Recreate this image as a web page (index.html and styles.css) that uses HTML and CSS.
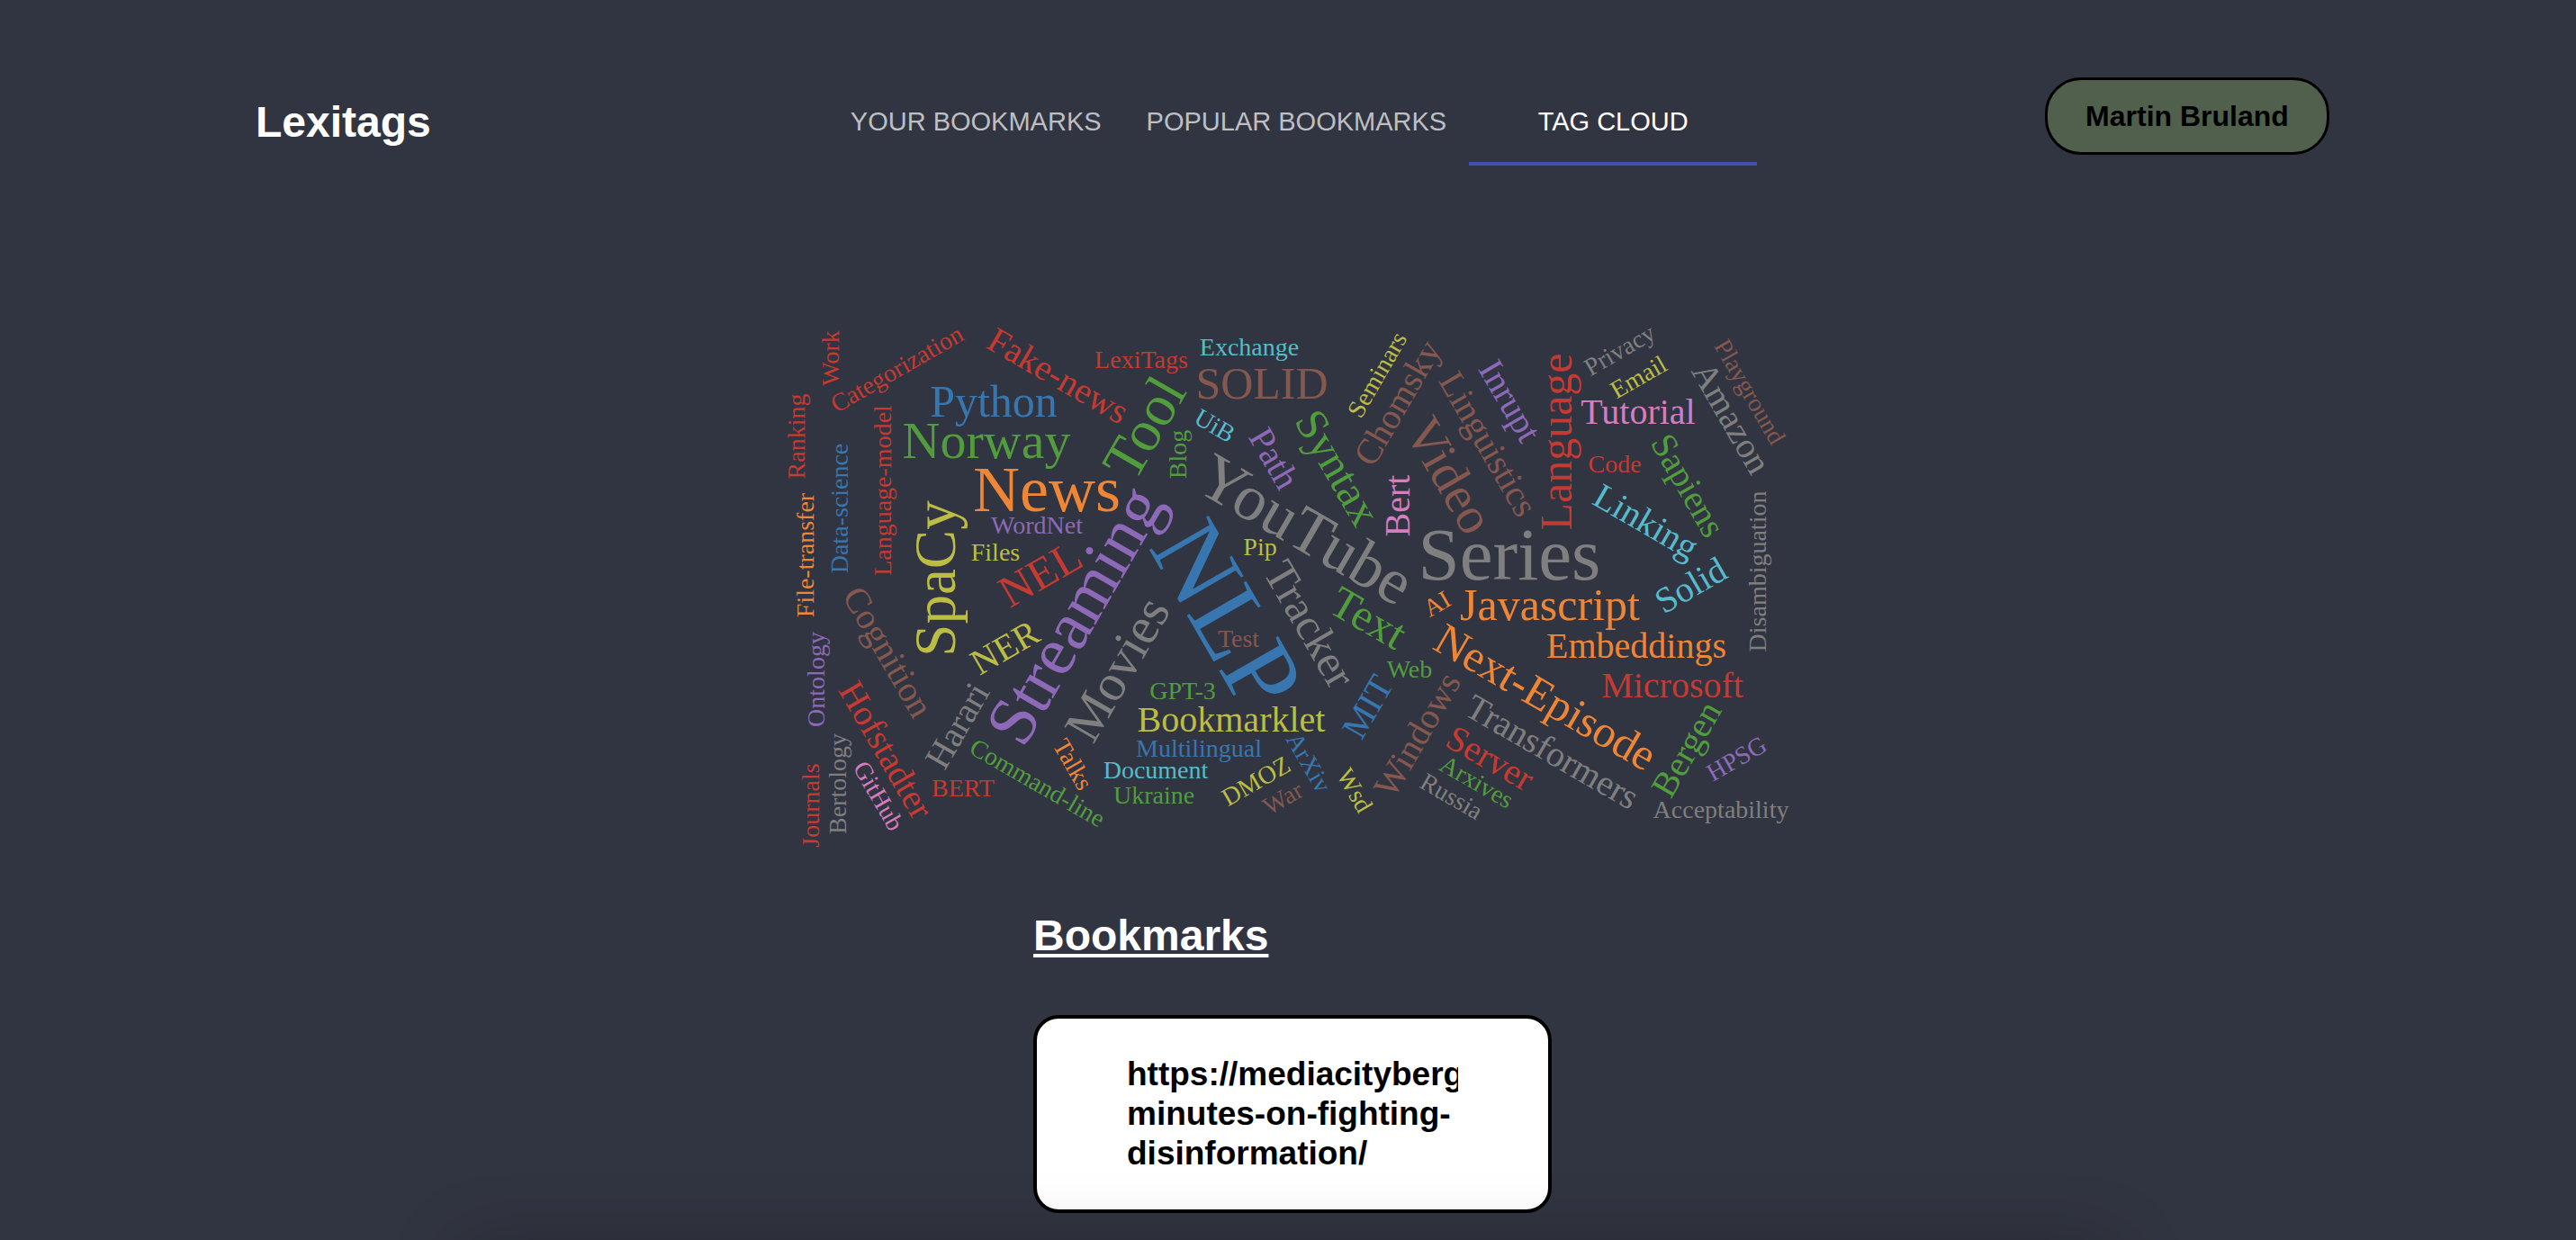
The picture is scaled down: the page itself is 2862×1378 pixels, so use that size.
FILE: index.html
```html
<!DOCTYPE html>
<html lang="en">
<head>
<meta charset="utf-8">
<meta name="viewport" content="width=device-width, initial-scale=1">
<title>Lexitags</title>
<link rel="stylesheet" href="styles.css">
</head>
<body>
<div class="page">
  <header class="header">
    <h1 class="brand">Lexitags</h1>
    <nav class="tabs" role="tablist">
      <button class="tab" type="button" role="tab" aria-selected="false">YOUR BOOKMARKS</button>
      <button class="tab" type="button" role="tab" aria-selected="false">POPULAR BOOKMARKS</button>
      <button class="tab tab-active" type="button" role="tab" aria-selected="true">TAG CLOUD</button>
    </nav>
    <button class="user" type="button">Martin Bruland</button>
  </header>

  <main class="content">
    <svg class="cloud" viewBox="836 330 1200 640" role="group" aria-label="Tag cloud">
      <!-- most used tags -->
      <text class="blue s9" transform="translate(1330 703) rotate(60)">NLP</text>
      <text class="gray s8" transform="translate(1677 644)">Series</text>
      <text class="purple s7" transform="translate(1216 696) rotate(-60)">Streaming</text>
      <text class="orange s6" transform="translate(1163 568)">News</text>
      <text class="gray s6" transform="translate(1439 609) rotate(30)">YouTube</text>
      <text class="olive s5" transform="translate(1061 643) rotate(-90)">SpaCy</text>
      <text class="green s5" transform="translate(1290 486) rotate(-60)">Tool</text>
      <!-- four bookmarks -->
      <text class="green s4" transform="translate(1096 509)">Norway</text>
      <text class="brown s4" transform="translate(1594 538) rotate(60)">Video</text>
      <text class="gray s4" transform="translate(1258 753) rotate(-60)">Movies</text>
      <!-- three bookmarks -->
      <text class="blue s3" transform="translate(1104 463)">Python</text>
      <text class="brown s3" transform="translate(1402 443)">SOLID</text>
      <text class="orange s3" transform="translate(1722 689)">Javascript</text>
      <text class="red s3" transform="translate(1746 491) rotate(-90)">Language</text>
      <text class="red s3" transform="translate(1164 652) rotate(-30)">NEL</text>
      <text class="green s3" transform="translate(1512 701) rotate(30)">Text</text>
      <text class="orange s3" transform="translate(1709 789) rotate(30)">Next-Episode</text>
      <text class="green s3" transform="translate(1472 528) rotate(60)">Syntax</text>
      <text class="gray s3" transform="translate(1441 702) rotate(60)">Tracker</text>
      <!-- two bookmarks -->
      <text class="pink s2" transform="translate(1820 471)">Tutorial</text>
      <text class="olive s2" transform="translate(1368 813)">Bookmarklet</text>
      <text class="orange s2" transform="translate(1818 731)">Embeddings</text>
      <text class="red s2" transform="translate(1858 775)">Microsoft</text>
      <text class="pink s2" transform="translate(1566 562) rotate(-90)">Bert</text>
      <text class="olive s2" transform="translate(1123 731) rotate(-30)">NER</text>
      <text class="cyan s2" transform="translate(1885 662) rotate(-30)">Solid</text>
      <text class="red s2" transform="translate(1169 429) rotate(30)">Fake-news</text>
      <text class="cyan s2" transform="translate(1822 591) rotate(30)">Linking</text>
      <text class="gray s2" transform="translate(1718 847) rotate(30)">Transformers</text>
      <text class="red s2" transform="translate(1649 854) rotate(30)">Server</text>
      <text class="purple s2" transform="translate(1404 516) rotate(60)">Path</text>
      <text class="brown s2" transform="translate(1642 500) rotate(60)">Linguistics</text>
      <text class="purple s2" transform="translate(1666 452) rotate(60)">Inrupt</text>
      <text class="green s2" transform="translate(1864 546) rotate(60)">Sapiens</text>
      <text class="gray s2" transform="translate(1912 471) rotate(60)">Amazon</text>
      <text class="brown s2" transform="translate(975 731) rotate(60)">Cognition</text>
      <text class="red s2" transform="translate(973 840) rotate(60)">Hofstadter</text>
      <text class="gray s2" transform="translate(1075 813) rotate(-60)">Harari</text>
      <text class="brown s2" transform="translate(1564 454) rotate(-60)">Chomsky</text>
      <text class="blue s2" transform="translate(1531 792) rotate(-60)">MIT</text>
      <text class="brown s2" transform="translate(1586 823) rotate(-60)">Windows</text>
      <text class="green s2" transform="translate(1885 839) rotate(-60)">Bergen</text>
      <!-- one bookmark -->
      <text class="purple s1" transform="translate(1152 593)">WordNet</text>
      <text class="olive s1" transform="translate(1106 623)">Files</text>
      <text class="red s1" transform="translate(1268 409)">LexiTags</text>
      <text class="cyan s1" transform="translate(1388 395)">Exchange</text>
      <text class="olive s1" transform="translate(1400 617)">Pip</text>
      <text class="red s1" transform="translate(1794 525)">Code</text>
      <text class="red s1" transform="translate(1070 885)">BERT</text>
      <text class="brown s1" transform="translate(1376 719)">Test</text>
      <text class="green s1" transform="translate(1314 777)">GPT-3</text>
      <text class="blue s1" transform="translate(1332 841)">Multilingual</text>
      <text class="cyan s1" transform="translate(1284 865)">Document</text>
      <text class="green s1" transform="translate(1282 893)">Ukraine</text>
      <text class="green s1" transform="translate(1566 753)">Web</text>
      <text class="gray s1" transform="translate(1912 909)">Acceptability</text>
      <text class="red s1" transform="translate(932 398) rotate(-90)">Work</text>
      <text class="red s1" transform="translate(894 485) rotate(-90)">Ranking</text>
      <text class="blue s1" transform="translate(942 565) rotate(-90)">Data-science</text>
      <text class="red s1" transform="translate(990 545) rotate(-90)">Language-model</text>
      <text class="orange s1" transform="translate(904 617) rotate(-90)">File-transfer</text>
      <text class="green s1" transform="translate(1318 505) rotate(-90)">Blog</text>
      <text class="gray s1" transform="translate(1962 635) rotate(-90)">Disambiguation</text>
      <text class="purple s1" transform="translate(916 755) rotate(-90)">Ontology</text>
      <text class="gray s1" transform="translate(940 871) rotate(-90)">Bertology</text>
      <text class="red s1" transform="translate(910 895) rotate(-90)">Journals</text>
      <text class="red s1" transform="translate(1001 418) rotate(-30)">Categorization</text>
      <text class="gray s1" transform="translate(1804 397) rotate(-30)">Privacy</text>
      <text class="olive s1" transform="translate(1825 427) rotate(-30)">Email</text>
      <text class="purple s1" transform="translate(1934 851) rotate(-30)">HPSG</text>
      <text class="olive s1" transform="translate(1400 876) rotate(-30)">DMOZ</text>
      <text class="brown s1" transform="translate(1430 895) rotate(-30)">War</text>
      <text class="orange s1" transform="translate(1601 679) rotate(-30)">AI</text>
      <text class="cyan s1" transform="translate(1345 481) rotate(30)">UiB</text>
      <text class="green s1" transform="translate(1636 877) rotate(30)">Arxives</text>
      <text class="gray s1" transform="translate(1608 893) rotate(30)">Russia</text>
      <text class="green s1" transform="translate(1148 878) rotate(30)">Command-line</text>
      <text class="brown s1" transform="translate(1936 440) rotate(60)">Playground</text>
      <text class="pink s1" transform="translate(968 889) rotate(60)">GitHub</text>
      <text class="orange s1" transform="translate(1184 854) rotate(60)">Talks</text>
      <text class="olive s1" transform="translate(1497 883) rotate(60)">Wsd</text>
      <text class="blue s1" transform="translate(1446 852) rotate(60)">ArXiv</text>
      <text class="olive s1" transform="translate(1538 421) rotate(-60)">Seminars</text>
    </svg>

    <section class="bookmarks">
      <h2 class="bookmarks-title">Bookmarks</h2>
      <article class="card">
        <h3 class="card-url">https://mediacityberg<br>minutes-on-fighting-<br>disinformation/</h3>
      </article>
    </section>
  </main>
</div>
<div class="shade"></div>
</body>
</html>
```

FILE: styles.css
```css
* {
  box-sizing: border-box;
}

body {
  margin: 0;
  background: #313541;
  color: #fff;
  font-family: "Liberation Sans", Arial, Helvetica, sans-serif;
}

.page {
  padding: 86px 274px 30px 284px;
}

.header {
  display: grid;
  grid-template-columns: 1fr auto 1fr;
  align-items: start;
}

.brand {
  margin: 22px 0 0;
  font-size: 48px;
  line-height: 56px;
}

.tabs {
  display: flex;
}

.tab {
  min-width: 320px;
  height: 98px;
  padding: 4px 25px 0;
  border: 0;
  border-bottom: 4px solid transparent;
  background: none;
  color: #bebfc2;
  font-family: inherit;
  font-size: 29px;
  line-height: 48px;
  cursor: pointer;
}

.tab-active {
  border-bottom-color: #3f51b5;
  color: #fff;
}

.user {
  justify-self: end;
  width: 316px;
  height: 86px;
  border: 3px solid #000;
  border-radius: 40px;
  background: #50604c;
  color: #000;
  font-family: inherit;
  font-size: 32px;
  font-weight: bold;
  cursor: pointer;
}

.content {
  display: flex;
  flex-direction: column;
  align-items: center;
  gap: 42px;
  padding-top: 146px;
}

/* Tag cloud: size classes follow the number of bookmarks per tag */
.cloud {
  display: block;
  width: 100%;
  max-width: 1200px;
  font-family: "Liberation Serif", "Times New Roman", serif;
  text-anchor: middle;
  cursor: pointer;
}

.s1 { font-size: 28px; }
.s2 { font-size: 40px; }
.s3 { font-size: 50px; }
.s4 { font-size: 58px; }
.s5 { font-size: 65px; }
.s6 { font-size: 72px; }
.s7 { font-size: 77px; }
.s8 { font-size: 83px; }
.s9 { font-size: 116px; }

.blue { fill: #3876af; }
.orange { fill: #ef8636; }
.green { fill: #519d3e; }
.red { fill: #c53a32; }
.purple { fill: #8d69b8; }
.brown { fill: #84584e; }
.pink { fill: #d57dbe; }
.gray { fill: #7f7f7f; }
.olive { fill: #bcbd45; }
.cyan { fill: #56bbcc; }

.bookmarks {
  width: 100%;
  max-width: 576px;
}

.bookmarks-title {
  margin: 0 0 60px;
  font-size: 48px;
  line-height: 56px;
  text-decoration: underline;
  text-decoration-thickness: 4px;
  text-decoration-skip-ink: none;
  text-underline-offset: 4px;
}

.card {
  padding: 40px 100px;
  border: 4px solid #000;
  border-radius: 28px;
  background: #fff;
  color: #000;
}

.card-url {
  margin: 0;
  overflow: hidden;
  font-size: 37px;
  line-height: 44px;
  white-space: nowrap;
}

/* Soft shade rising from below the bottom edge of the window */
.shade {
  position: fixed;
  right: 18%;
  bottom: -210px;
  left: 18%;
  height: 200px;
  box-shadow: 0 0 80px rgba(0, 0, 0, 0.25);
  pointer-events: none;
}
```
